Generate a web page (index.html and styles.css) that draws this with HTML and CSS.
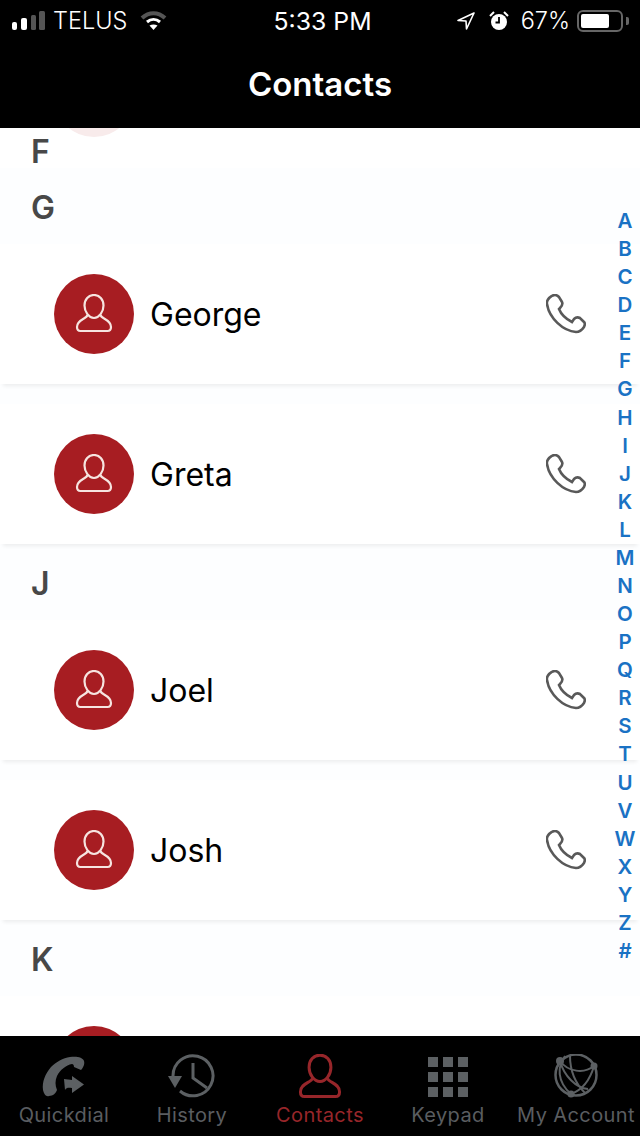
FILE: index.html
```html
<!DOCTYPE html>
<html lang="en">
<head>
    <meta charset="UTF-8">
    <meta name="viewport" content="width=device-width, initial-scale=1.0">
    <title>Contacts</title>
    <link rel="stylesheet" href="styles.css">
</head>
<body>
    <svg class="defs" width="0" height="0">
        <symbol id="person" viewBox="0 0 40 40">
            <path d="M20 1c-5.500 0-9.500 4.500-9.500 10.500 0 6.500 4.500 12.500 9.500 12.500s9.500-6 9.500-12.500C29.500 5.500 25.500 1 20 1z"/>
            <path d="M13.500 21c-.5 4-10.500 4-10.500 12 0 2.500 1 4 3.500 4h27c2.500 0 3.500-1.500 3.500-4 0-8-10-8-10.500-12"/>
        </symbol>
        <symbol id="phone" viewBox="0 0 40 40">
            <path d="M1 10C0 6 5 1 9 1c2 0 3 1 4 2l3 5c1 2 0 4-2 6l-1 1c2 5 7 10 13 13l2-3c2-2 4-2 6-1l4 4c1 1 1 3 0 5-2 3-5 5-8 5C17 37 3 24 1 10z"/>
        </symbol>
    </svg>

    <div class="app">
        <header class="top">
            <div class="status">
                <div class="status-left">
                    <svg class="signal" width="33" height="19" viewBox="0 0 33 19">
                        <rect x="0" y="11" width="5" height="8" rx="2" fill="#fff"/>
                        <rect x="9" y="7" width="6" height="12" rx="2" fill="#fff"/>
                        <rect x="19" y="4" width="5" height="15" rx="1.500" fill="#555"/>
                        <rect x="27" y="0" width="6" height="19" rx="1.500" fill="#555"/>
                    </svg>
                    <span>TELUS</span>
                    <svg class="wifi" width="27" height="19" viewBox="0 0 27 19" fill="none">
                        <path d="M2 7c7-6.500 16-6.500 23 0" stroke="#555" stroke-width="4"/>
                        <path d="M7 11c4-3.500 9-3.500 13 0" stroke="#fff" stroke-width="3"/>
                        <path d="M9.500 14.500l4 4.500 4-4.500c-2.500-1.500-5.500-1.500-8 0z" fill="#fff"/>
                    </svg>
                </div>
                <div class="status-time">5:33 PM</div>
                <div class="status-right">
                    <svg width="18" height="18" viewBox="0 0 18 18" fill="none" stroke="#fff" stroke-width="1.600" stroke-linejoin="round">
                        <path d="M17 1L1 8.500l8 .5.500 8z"/>
                    </svg>
                    <svg class="alarm" width="20" height="20" viewBox="0 0 20 20">
                        <circle cx="10" cy="11" r="8" fill="#fff"/>
                        <path d="M10 6v5.500H6.500" fill="none" stroke="#000" stroke-width="1.800"/>
                        <path d="M1 5l4-4M19 5l-4-4" stroke="#fff" stroke-width="2"/>
                    </svg>
                    <span>67%</span>
                    <div class="battery">
                        <div class="battery-level"></div>
                    </div>
                    <div class="battery-tip"></div>
                </div>
            </div>
            <h1 class="title">Contacts</h1>
        </header>

        <main class="list">
            <div class="faded-avatar"></div>

            <div class="letter letter-f">F</div>

            <div class="letter">G</div>
            <div class="group">
                <div class="row">
                    <div class="avatar"><svg class="avatar-icon"><use href="#person"/></svg></div>
                    <div class="name">George</div>
                    <svg class="call"><use href="#phone"/></svg>
                </div>
                <div class="row">
                    <div class="avatar"><svg class="avatar-icon"><use href="#person"/></svg></div>
                    <div class="name">Greta</div>
                    <svg class="call"><use href="#phone"/></svg>
                </div>
            </div>

            <div class="letter">J</div>
            <div class="group">
                <div class="row">
                    <div class="avatar"><svg class="avatar-icon"><use href="#person"/></svg></div>
                    <div class="name">Joel</div>
                    <svg class="call"><use href="#phone"/></svg>
                </div>
                <div class="row">
                    <div class="avatar"><svg class="avatar-icon"><use href="#person"/></svg></div>
                    <div class="name">Josh</div>
                    <svg class="call"><use href="#phone"/></svg>
                </div>
            </div>

            <div class="letter">K</div>
            <div class="group">
                <div class="row">
                    <div class="avatar"><svg class="avatar-icon"><use href="#person"/></svg></div>
                </div>
            </div>

            <div class="index">
                <span>A</span><span>B</span><span>C</span><span>D</span><span>E</span><span>F</span><span>G</span>
                <span>H</span><span>I</span><span>J</span><span>K</span><span>L</span><span>M</span><span>N</span>
                <span>O</span><span>P</span><span>Q</span><span>R</span><span>S</span><span>T</span><span>U</span>
                <span>V</span><span>W</span><span>X</span><span>Y</span><span>Z</span><span>#</span>
            </div>
        </main>

        <nav class="tabs">
            <div class="tab">
                <svg class="tab-icon" viewBox="0 0 48 46">
                    <path class="fill" d="M30 3C36 2 43 3 44 7c1 3-1 7-3 9l-7-3c0-2-1-3-2-3-6 1-12 6-15 12-2 5-2 9 0 14-1 3-4 6-8 6-3 1-5-2-6-6-1-8 2-16 8-23C16 8 23 4 30 3z"/>
                    <path class="fill" d="M24 25c2 0 6 1 8 1v-4l12 8.500L32 39v-5c-3 0-5-1-7 2l-1-11z"/>
                </svg>
                <span>Quickdial</span>
            </div>
            <div class="tab">
                <svg class="tab-icon" viewBox="0 0 48 46">
                    <path class="line" d="M5 22A20 20 0 1 1 12 37" stroke-width="3"/>
                    <path class="line" d="M25 9v15l14 10" stroke-width="3"/>
                    <path class="fill" d="M0 22h14L7 34z"/>
                </svg>
                <span>History</span>
            </div>
            <div class="tab tab-active">
                <svg class="tab-icon tab-person"><use href="#person"/></svg>
                <span>Contacts</span>
            </div>
            <div class="tab">
                <div class="keys">
                    <i></i><i></i><i></i><i></i><i></i><i></i><i></i><i></i><i></i>
                </div>
                <span>Keypad</span>
            </div>
            <div class="tab">
                <svg class="tab-icon" viewBox="0 0 48 46">
                    <circle class="line" cx="24" cy="21" r="20.500" stroke-width="2.500"/>
                    <path class="line" d="M13 2C5 12 5 28 19 40M8 7c8 11 24 13 34 5M42 12c-4 14-12 24-23 28M18 2c0 12 4 26 15 37M8 7c4 15 16 27 28 28" stroke-width="2"/>
                    <circle class="fill" cx="8" cy="7" r="4"/>
                    <circle class="fill" cx="42" cy="12" r="3.500"/>
                    <circle class="fill" cx="19" cy="40" r="3.500"/>
                </svg>
                <span>My Account</span>
            </div>
        </nav>
    </div>
</body>
</html>
```

FILE: styles.css
```css
body {
    margin: 0;
    background-color: #000;
    font-family: Inter, "Liberation Sans", sans-serif;
}

.defs {
    position: absolute;
}

.app {
    display: flex;
    flex-direction: column;
    width: 640px;
    height: 1136px;
    overflow: hidden;
}

/* Status bar and title */
.top {
    flex: none;
    height: 128px;
    background-color: #000;
    color: #fff;
}

.status {
    display: grid;
    grid-template-columns: 1fr auto 1fr;
    align-items: center;
    height: 41px;
    padding: 0 11px 0 12px;
    font-size: 23.500px;
    font-weight: 300;
}

.status-left,
.status-right {
    display: flex;
    align-items: center;
}

.status-left span {
    margin-left: 8px;
}

.wifi {
    margin-left: 13px;
}

.status-time {
    margin-left: 4px;
    font-size: 24.800px;
    font-weight: 400;
}

.status-right {
    justify-content: flex-end;
}

.alarm {
    margin-left: 14px;
}

.status-right span {
    margin-left: 12px;
}

.battery {
    width: 46px;
    height: 22px;
    margin-left: 7px;
    padding: 2px;
    box-sizing: border-box;
    border: 2px solid #666;
    border-radius: 6px;
}

.battery-level {
    width: 28px;
    height: 100%;
    background-color: #fff;
    border-radius: 2px;
}

.battery-tip {
    width: 3px;
    height: 8px;
    margin-left: 3px;
    background-color: #666;
    border-radius: 0 2px 2px 0;
}

.title {
    margin: 0;
    text-align: center;
    font-size: 33px;
    font-weight: 600;
    line-height: 87px;
}

/* Contact list */
.list {
    position: relative;
    flex: 1;
    min-height: 0;
    overflow: hidden;
    background-color: #fdfeff;
}

.faded-avatar {
    position: absolute;
    left: 54px;
    top: -71px;
    width: 80px;
    height: 80px;
    border-radius: 50%;
    background-color: #f8ebeb;
}

.letter {
    display: flex;
    align-items: center;
    height: 76px;
    padding: 2px 0 0 31px;
    box-sizing: border-box;
    font-size: 32px;
    font-weight: 600;
    color: #484848;
}

.letter-f {
    height: 40px;
    padding-top: 6px;
    background-color: #fff;
}

.group {
    display: flex;
    flex-direction: column;
    gap: 20px;
}

.row {
    display: flex;
    flex: none;
    align-items: center;
    height: 140px;
    padding: 0 54px;
    background-color: #fff;
    box-shadow: 0 5px 4px -3px rgba(0, 0, 0, 0.07);
}

.avatar {
    display: flex;
    flex: none;
    align-items: center;
    justify-content: center;
    width: 80px;
    height: 80px;
    border-radius: 50%;
    background-color: #a71d22;
}

.avatar-icon {
    width: 40px;
    height: 40px;
    fill: none;
    stroke: #f6e4e0;
    stroke-width: 2.200;
}

.name {
    flex: 1;
    margin-left: 16px;
    font-size: 32px;
    color: #000;
}

.call {
    flex: none;
    width: 40px;
    height: 40px;
    fill: none;
    stroke: #595959;
    stroke-width: 2.600;
}

/* A-Z scrubber */
.index {
    position: absolute;
    top: 79px;
    right: 0;
    display: flex;
    flex-direction: column;
    width: 30px;
    text-align: center;
    font-size: 20.500px;
    font-weight: 600;
    line-height: 28.080px;
    color: #1a72c4;
}

/* Bottom tabs */
.tabs {
    display: grid;
    flex: none;
    grid-template-columns: repeat(5, 1fr);
    height: 100px;
    background-color: #000;
    color: #5a5d60;
}

.tab {
    display: flex;
    flex-direction: column;
    align-items: center;
    padding-top: 18px;
    font-size: 20px;
    line-height: 28px;
    letter-spacing: 0.4px;
    white-space: nowrap;
}

.tab-active {
    color: #97262a;
}

.tab-icon {
    width: 48px;
    height: 46px;
    margin-bottom: 1px;
}

.tab-icon .fill {
    fill: #5c6063;
}

.tab-icon .line {
    fill: none;
    stroke: #5c6063;
}

.tab-person {
    fill: none;
    stroke: #97262a;
    stroke-width: 2.600;
}

.keys {
    display: grid;
    grid-template-columns: repeat(3, 10px);
    grid-auto-rows: 10px;
    gap: 5px;
    margin: 3px 0 4px;
}

.keys i {
    background-color: #5c6063;
}
```
